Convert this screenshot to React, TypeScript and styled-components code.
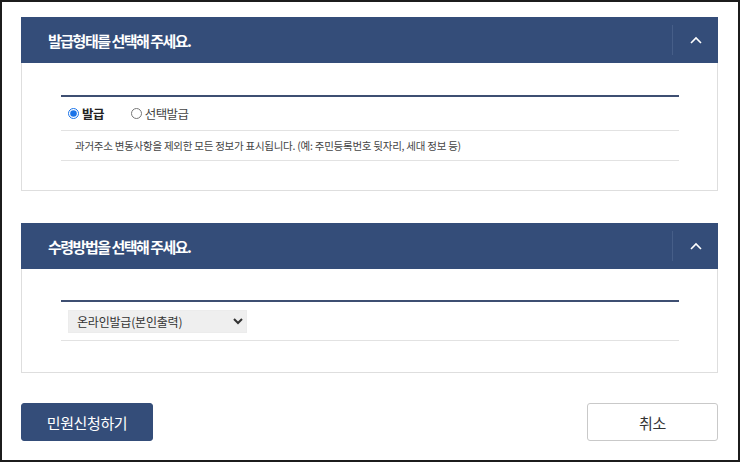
import React, { useState } from "react";
import styled, { createGlobalStyle } from "styled-components";

const GlobalStyle = createGlobalStyle`
  html, body {
    margin: 0;
    padding: 0;
    background: #ffffff;
  }
  body {
    font-family: "Noto Sans CJK KR", "Noto Sans", sans-serif;
    color: #333;
  }
  * {
    box-sizing: border-box;
  }
`;

const Frame = styled.div`
  width: 740px;
  height: 462px;
  border: 2px solid #1c1c1c;
  padding: 15px 20px 0 19px;
  display: flex;
  flex-direction: column;
  gap: 32px;
`;

const Panel = styled.section`
  display: flex;
  flex-direction: column;
`;

const PanelHeader = styled.div`
  height: 46px;
  background: #344d79;
  display: flex;
  align-items: center;
`;

const PanelTitle = styled.h2`
  flex: 1;
  margin: 0;
  padding-left: 27px;
  color: #fff;
  font-size: 15px;
  font-weight: 700;
  letter-spacing: -1.5px;
`;

const ToggleButton = styled.button`
  width: 46px;
  height: 30px;
  border: 0;
  border-left: 1px solid #465e88;
  background: transparent;
  display: flex;
  align-items: center;
  justify-content: center;
  padding: 0;
  cursor: pointer;
`;

const PanelBody = styled.div<{ $top: number; $bottom: number }>`
  border: 1px solid #dedede;
  border-top: 0;
  padding: ${(p) => p.$top}px 38px ${(p) => p.$bottom}px 39px;
`;

const Table = styled.div`
  border-top: 2px solid #3e4f72;
`;

const Row = styled.div<{ $h: number; $pl: number }>`
  height: ${(p) => p.$h}px;
  padding-left: ${(p) => p.$pl}px;
  border-bottom: 1px solid #e2e2e2;
  display: flex;
  align-items: center;
`;

const RadioLabel = styled.label<{ $bold?: boolean }>`
  display: flex;
  align-items: center;
  gap: 3px;
  margin-right: 27px;
  font-size: 12.5px;
  font-weight: ${(p) => (p.$bold ? 700 : 400)};
  color: ${(p) => (p.$bold ? "#222" : "#444")};
  letter-spacing: -0.6px;
  cursor: pointer;

  input {
    width: 11px;
    height: 11px;
    margin: 0;
    accent-color: #1a73e8;
  }
`;

const Desc = styled.p`
  margin: 0;
  font-size: 10.5px;
  color: #444;
  letter-spacing: -0.25px;
`;

const Select = styled.select`
  width: 179px;
  height: 23px;
  border: 1px solid #ececec;
  background: #efefef;
  font-family: inherit;
  font-size: 12px;
  letter-spacing: -0.2px;
  color: #333;
  padding: 0 4px;
  border-radius: 0;
`;

const Actions = styled.div`
  display: flex;
  justify-content: space-between;
  margin-top: -2px;
`;

const Button = styled.button<{ $primary?: boolean }>`
  width: ${(p) => (p.$primary ? 132 : 131)}px;
  height: 38px;
  border-radius: 3px;
  font-family: inherit;
  font-size: 15px;
  letter-spacing: -0.4px;
  cursor: pointer;
  border: 1px solid ${(p) => (p.$primary ? "#344d79" : "#c9c9c9")};
  background: ${(p) => (p.$primary ? "#344d79" : "#fff")};
  color: ${(p) => (p.$primary ? "#fff" : "#333")};
`;

const ChevronUp = () => (
  <svg width="12" height="8" viewBox="0 0 12 8" fill="none">
    <path d="M1 7 L6 2 L11 7" stroke="#fff" strokeWidth="1.6" />
  </svg>
);

export default function App() {
  const [kind, setKind] = useState("all");

  return (
    <>
      <GlobalStyle />
      <Frame>
        <Panel>
          <PanelHeader>
            <PanelTitle>발급형태를 선택해 주세요.</PanelTitle>
            <ToggleButton aria-label="접기">
              <ChevronUp />
            </ToggleButton>
          </PanelHeader>
          <PanelBody $top={32} $bottom={29}>
            <Table>
              <Row $h={34} $pl={7}>
                <RadioLabel $bold={kind === "all"}>
                  <input
                    type="radio"
                    name="kind"
                    checked={kind === "all"}
                    onChange={() => setKind("all")}
                  />
                  발급
                </RadioLabel>
                <RadioLabel $bold={kind === "select"}>
                  <input
                    type="radio"
                    name="kind"
                    checked={kind === "select"}
                    onChange={() => setKind("select")}
                  />
                  선택발급
                </RadioLabel>
              </Row>
              <Row $h={30} $pl={14}>
                <Desc>
                  과거주소 변동사항을 제외한 모든 정보가 표시됩니다. (예: 주민등록번호 뒷자리, 세대 정보 등)
                </Desc>
              </Row>
            </Table>
          </PanelBody>
        </Panel>

        <Panel>
          <PanelHeader>
            <PanelTitle>수령방법을 선택해 주세요.</PanelTitle>
            <ToggleButton aria-label="접기">
              <ChevronUp />
            </ToggleButton>
          </PanelHeader>
          <PanelBody $top={31} $bottom={31}>
            <Table>
              <Row $h={39} $pl={7}>
                <Select defaultValue="online">
                  <option value="online">온라인발급(본인출력)</option>
                  <option value="visit">방문수령</option>
                </Select>
              </Row>
            </Table>
          </PanelBody>
        </Panel>

        <Actions>
          <Button $primary>민원신청하기</Button>
          <Button>취소</Button>
        </Actions>
      </Frame>
    </>
  );
}
